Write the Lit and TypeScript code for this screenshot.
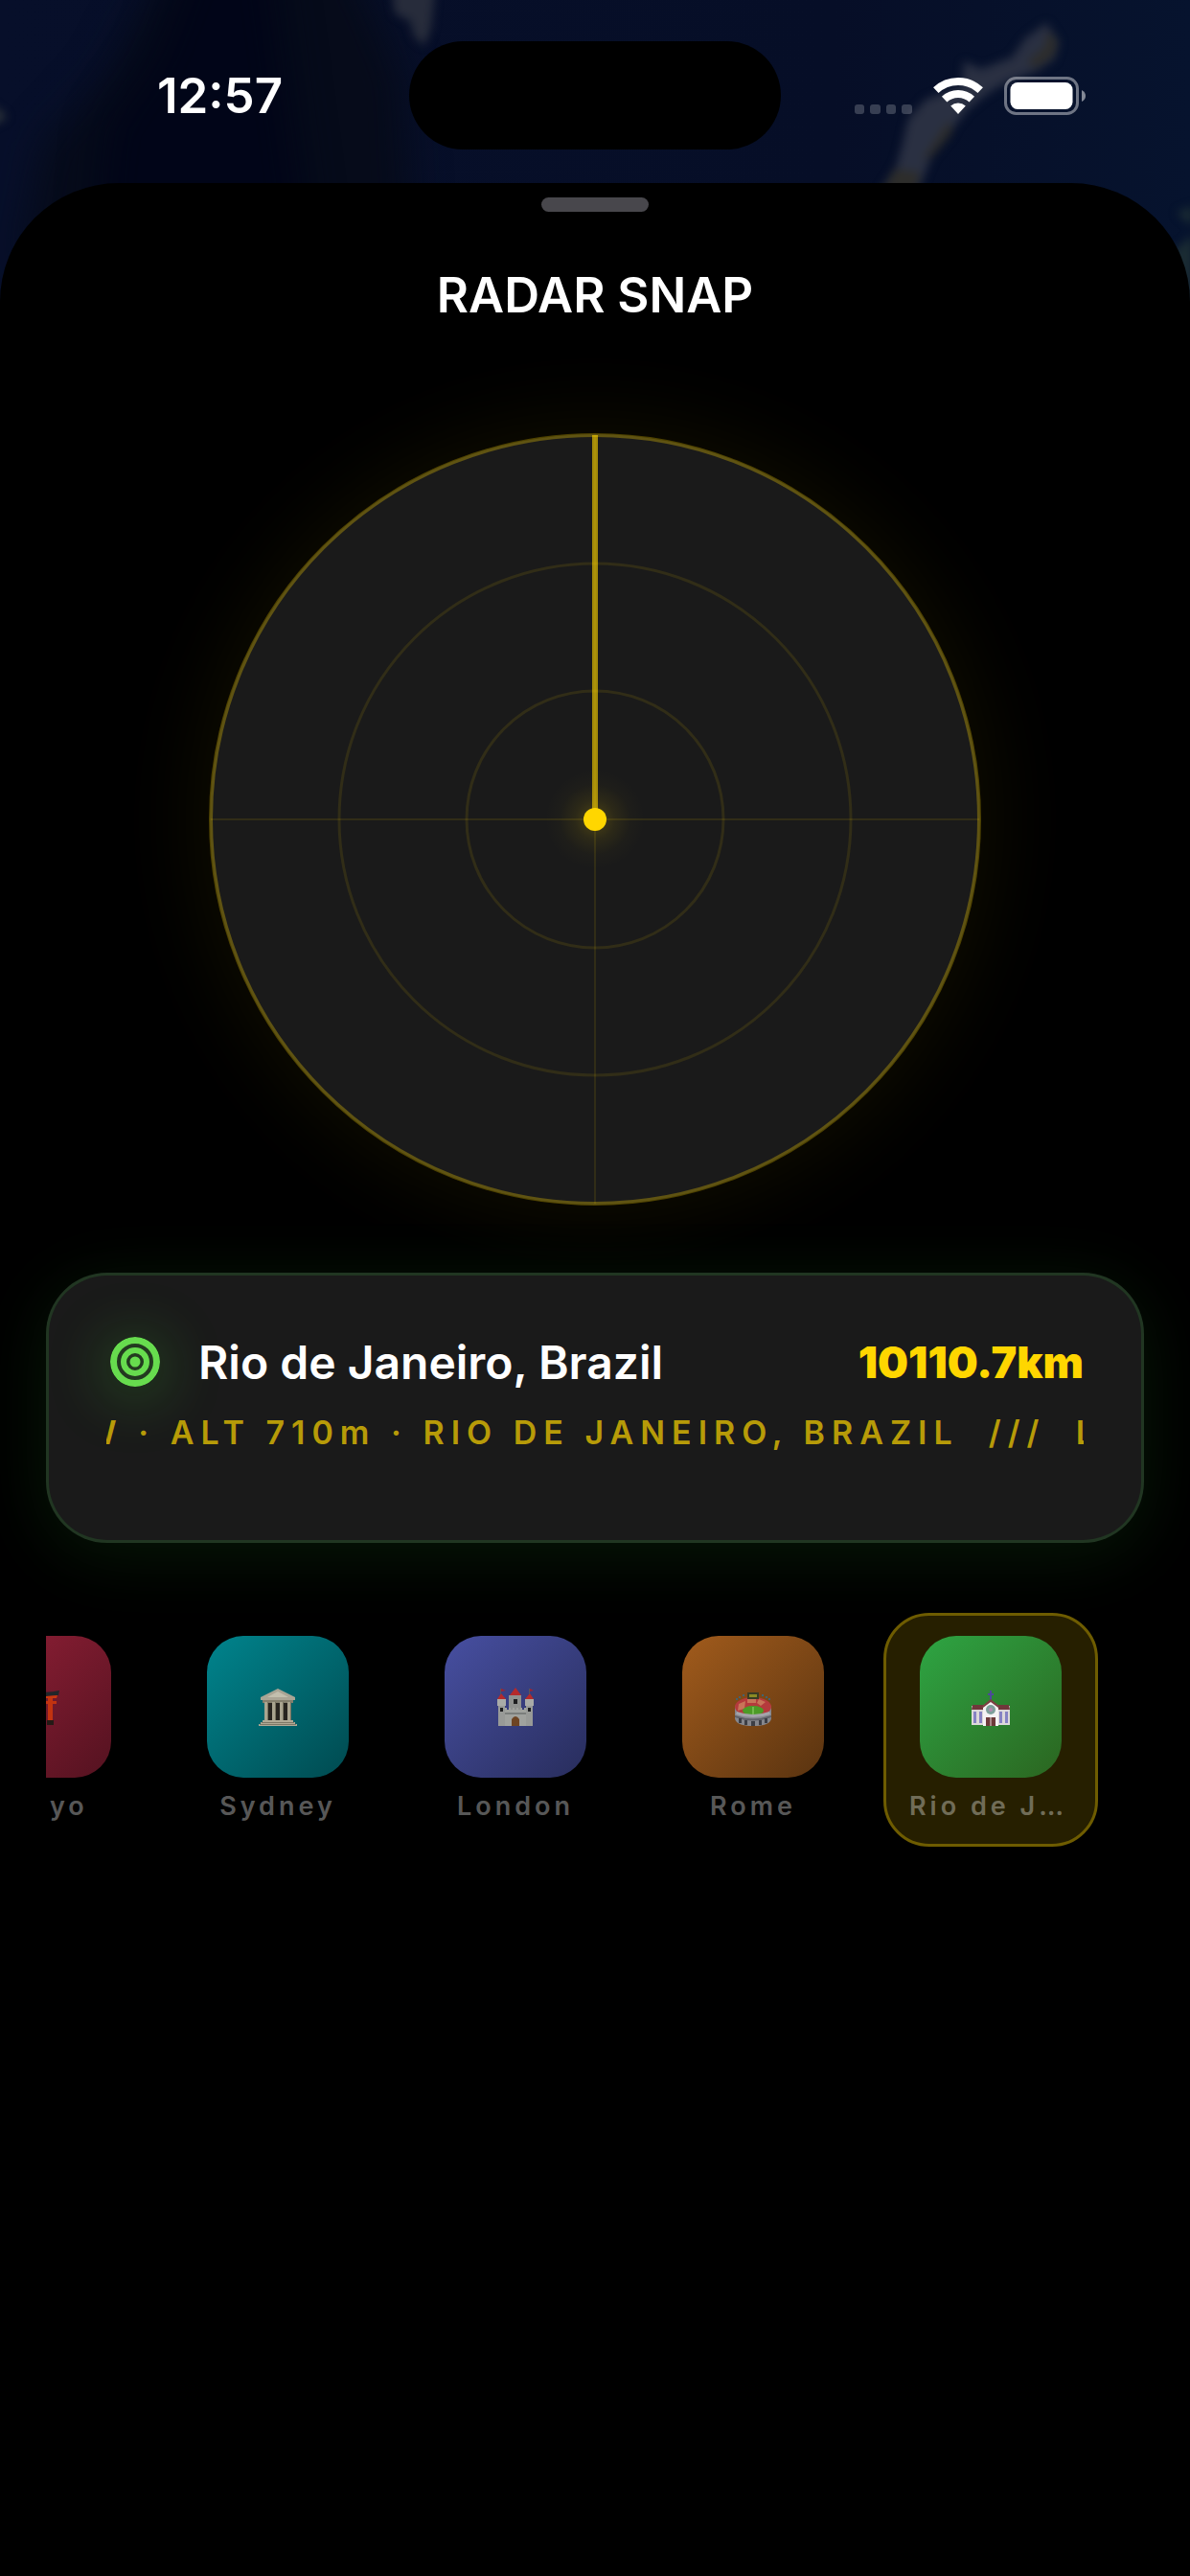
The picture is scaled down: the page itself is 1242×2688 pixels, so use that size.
import { LitElement, html, css, svg } from 'lit';
import { customElement, property, state } from 'lit/decorators.js';
import { classMap } from 'lit/directives/class-map.js';

interface City {
  id: string;
  name: string;
  icon: unknown;
}

const toriiIcon = svg`
  <path d="M0 3 Q20 7 40 3 L39 8 Q20 10 1 8 Z" fill="#22262a" />
  <path d="M2 8 Q20 10 38 8 L37 11 H3 Z" fill="#c9370f" />
  <path d="M3 14 H37 V17 H3 Z M7 11 H12 V34 H7 Z M28 11 H33 V34 H28 Z M18 10 H22 V15 H18 Z" fill="#c23310" />
  <path d="M6 34 H13 V39 H6 Z M27 34 H34 V39 H27 Z" fill="#241a16" />
`;

const templeIcon = svg`
  <path d="M20 1 L38 10 V13 H2 V10 Z" fill="#aaa595" />
  <path d="M20 4 L31 10 H9 Z" fill="#c3bfae" />
  <path d="M4 13 H36 V16 H4 Z" fill="#847f6d" />
  <path d="M6 16 H34 V34 H6 Z" fill="#27241f" />
  <path d="M6 15 H10 V34 H6 Z M14 15 H18 V34 H14 Z M22 15 H26 V34 H22 Z M30 15 H34 V34 H30 Z" fill="#a9a48f" />
  <path d="M9 15 H10 V34 H9 Z M17 15 H18 V34 H17 Z M25 15 H26 V34 H25 Z M33 15 H34 V34 H33 Z" fill="#77725f" />
  <path d="M4 34 H36 V36 H38 V38 H40 V40 H0 V38 H2 V36 H4 Z" fill="#b0aa96" />
  <path d="M3 36 H37 V37 H3 Z M1 38 H39 V39 H1 Z" fill="#7d7867" />
`;

const castleIcon = svg`
  <path d="M13 8 H26 V24 H13 Z" fill="#8f918f" />
  <path d="M1 12 H10 V19 H1 Z M30 12 H39 V19 H30 Z" fill="#a9aba8" />
  <path d="M2 19 H9 V40 H2 Z M31 19 H38 V40 H31 Z" fill="#989a97" />
  <path d="M9 21 H11 V23 H13 V21 H15 V23 H17 V21 H19 V23 H21 V21 H23 V23 H25 V21 H27 V23 H29 V21 H31 V40 H9 Z" fill="#a0a29e" />
  <path d="M9 26 H31 V28 H9 Z" fill="#7b7e7c" />
  <path d="M20 0 L26 8 H14 Z M5 6 L10 12 H1 Z M35 6 L39 12 H30 Z" fill="#b52a2b" />
  <path d="M5 1 L10 3 L5 4 Z M35 1 L39 3 L35 4 Z" fill="#9f2532" />
  <path d="M4 1 H5 V7 H4 Z M34 1 H35 V7 H34 Z" fill="#56575c" />
  <path d="M18 12 H22 V17 H18 Z M4 21 H7 V25 H4 Z M33 21 H36 V25 H33 Z" fill="#1d1e20" />
  <path d="M16 40 V33 Q20 27 24 33 V40 Z" fill="#6e4423" />
`;

const stadiumIcon = svg`
  <path d="M1 19 H39 V32 Q38 40 20 40 Q2 40 1 32 Z" fill="#85868c" />
  <path d="M1 29 Q20 36 39 29 V31 Q20 38 1 31 Z" fill="#5f6067" />
  <path d="M5 32 H8 V37 H5 Z M11 34 H14 V39 H11 Z M18 35 H22 V40 H18 Z M26 34 H29 V39 H26 Z M32 32 H35 V37 H32 Z" fill="#3c3e45" />
  <ellipse cx="20" cy="20" rx="19" ry="10" fill="#b53a3c" />
  <path d="M5 17 L12 14 L11 22 L4 24 Z M26 12 L33 15 L28 19 L24 16 Z M14 12 H23 V16 H14 Z" fill="#c87458" />
  <ellipse cx="20" cy="24" rx="11" ry="5" fill="#4c9b26" />
  <path d="M19 20 H21 V28 H19 Z" fill="#73b94d" />
  <path d="M3 25 Q20 31 37 25 L38 28 Q20 34 2 28 Z" fill="#a3a4aa" />
  <path d="M14 5 H26 V12 H14 Z" fill="#3a3c24" />
  <path d="M16 7 H24 V10 H16 Z" fill="#8a8a24" />
  <g fill="#2d6c8f"><circle cx="3" cy="12" r="1" /><circle cx="6" cy="10" r="1" /><circle cx="10" cy="8" r="1" /><circle cx="30" cy="8" r="1" /><circle cx="34" cy="10" r="1" /><circle cx="37" cy="12" r="1" /></g>
`;

const churchIcon = svg`
  <path d="M19 3 H21 V13 H19 Z M17 6 H23 V8 H17 Z" fill="#4d4a9a" />
  <path d="M0 19 H40 V39 H0 Z" fill="#dcd8da" />
  <path d="M1 18 H39 L40 23 H0 Z" fill="#70383b" />
  <path d="M12 40 V19 L20 13 L28 19 V40 Z" fill="#f4f2f3" />
  <path d="M20 12 L30 20 L28 21 L20 15 L12 21 L10 20 Z" fill="#7b3f41" />
  <circle cx="20" cy="23" r="5" fill="#7e9f9b" />
  <circle cx="20" cy="23" r="2" fill="#b58bb0" />
  <path d="M2 25 H5 V37 H2 Z M8 25 H11 V37 H8 Z M29 25 H32 V37 H29 Z M35 25 H38 V37 H35 Z" fill="#8683c4" />
  <path d="M15 31 H25 V40 H15 Z" fill="#6d3a3a" />
  <path d="M19 31 H21 V40 H19 Z" fill="#a98a89" />
`;

const CITIES: City[] = [
  { id: 'tokyo', name: 'Tokyo', icon: toriiIcon },
  { id: 'sydney', name: 'Sydney', icon: templeIcon },
  { id: 'london', name: 'London', icon: castleIcon },
  { id: 'rome', name: 'Rome', icon: stadiumIcon },
  { id: 'rio', name: 'Rio de Janeiro', icon: churchIcon },
];

@customElement('status-bar')
export class StatusBar extends LitElement {
  static styles = css`
    :host {
      display: grid;
      grid-template-columns: 1fr 388px 1fr;
      align-items: center;
      padding: 43px 0 35px;
      color: #fff;
    }

    .time {
      padding-left: 32px;
      text-align: center;
      font-size: 51px;
      font-weight: 600;
      line-height: 60px;
    }

    .island {
      height: 113px;
      border-radius: 57px;
      background: #000;
    }

    .icons {
      display: flex;
      justify-content: center;
      align-items: center;
      gap: 22px;
      padding-right: 31px;
    }

    svg {
      display: block;
      flex: none;
    }
  `;

  render() {
    return html`
      <div class="time">12:57</div>
      <div class="island"></div>
      <div class="icons">
        <svg width="60" height="40" viewBox="0 0 60 40" fill="#fff" fill-opacity="0.2">
          <rect x="0" y="29" width="10" height="10" rx="3" />
          <rect x="16" y="29" width="11" height="10" rx="3" />
          <rect x="33" y="29" width="10" height="10" rx="3" />
          <rect x="49" y="29" width="11" height="10" rx="3" />
        </svg>
        <svg width="52" height="40" viewBox="0 -1 52 40" fill="none" stroke="#fff" stroke-width="8">
          <path d="M2.8 13.1 A34 34 0 0 1 49.2 13.1" />
          <path d="M11.7 22.6 A21 21 0 0 1 40.3 22.6" />
          <path d="M26 38 L18.2 29.6 A11.5 11.5 0 0 1 33.8 29.6 Z" fill="#fff" stroke="none" />
        </svg>
        <svg width="86" height="40" viewBox="0 0 86 40">
          <rect x="1.5" y="1.5" width="75" height="37" rx="11" fill="none" stroke="#fff" stroke-opacity="0.42" stroke-width="3" />
          <rect x="6.5" y="6" width="65" height="28" rx="7.5" fill="#fff" />
          <path d="M81 14 Q85 16 85 20 Q85 24 81 26 Z" fill="#fff" fill-opacity="0.5" />
        </svg>
      </div>
    `;
  }
}

@customElement('radar-scope')
export class RadarScope extends LitElement {
  static styles = css`
    :host {
      display: block;
      width: 806px;
      max-width: 100%;
      border-radius: 50%;
      box-shadow: 0 0 100px rgba(255, 214, 0, 0.08);
    }

    svg {
      display: block;
      width: 100%;
      height: auto;
    }
  `;

  render() {
    return html`
      <svg viewBox="-403 -403 806 806" fill="none" stroke="#ffd600" role="img" aria-label="Radar">
        <defs>
          <radialGradient id="blip">
            <stop offset="0" stop-color="#ffd600" stop-opacity="0.22" />
            <stop offset="0.4" stop-color="#ffd600" stop-opacity="0.08" />
            <stop offset="0.7" stop-color="#ffd600" stop-opacity="0.02" />
            <stop offset="1" stop-color="#ffd600" stop-opacity="0" />
          </radialGradient>
        </defs>
        <circle r="402" fill="#1a1a1a" stroke="none" />
        <g stroke-opacity="0.1">
          <circle r="134" stroke-width="3" />
          <circle r="267" stroke-width="3" />
          <path d="M-401 0 H401 M0 -401 V401" stroke-width="2" />
        </g>
        <circle r="401" stroke-width="4" stroke-opacity="0.3" />
        <path d="M0 -401 V0" stroke-width="6" stroke-opacity="0.6" />
        <circle r="52" fill="url(#blip)" stroke="none" />
        <circle r="12" fill="#ffd600" stroke="none" />
      </svg>
    `;
  }
}

@customElement('target-card')
export class TargetCard extends LitElement {
  @property() place = '';
  @property() distance = '';
  @property() ticker = '';
  @property({ type: Number }) scrolled = 0;

  static styles = css`
    :host {
      display: block;
      padding: 54px 60px 90px;
      border: 3px solid rgba(76, 217, 80, 0.15);
      border-radius: 64px;
      background: #1a1a1a;
      box-shadow: 0 12px 72px rgba(60, 217, 60, 0.11);
    }

    .row {
      display: flex;
      align-items: center;
      height: 72px;
    }

    .mark {
      flex: none;
      padding: 4px;
      margin-right: 36px;
    }

    .mark svg {
      display: block;
      border-radius: 50%;
      background: #233a20;
      box-shadow: 0 6px 64px 4px rgba(76, 217, 60, 0.3);
    }

    h2 {
      flex: 1;
      margin: 0;
      font-size: 48px;
      font-weight: 600;
      color: #fff;
    }

    .distance {
      font-size: 45px;
      font-weight: 900;
      color: #ffd600;
    }

    .ticker {
      margin-top: 16px;
      overflow: hidden;
      white-space: pre;
      font-size: 34px;
      font-weight: 600;
      line-height: 44px;
      letter-spacing: 7px;
      color: rgba(255, 214, 0, 0.7);
    }
  `;

  render() {
    return html`
      <div class="row">
        <div class="mark">
          <svg width="52" height="52" viewBox="0 0 52 52" fill="none" stroke="#67dc4e">
            <circle cx="26" cy="26" r="22.5" stroke-width="7" />
            <circle cx="26" cy="26" r="12" stroke-width="6" />
            <circle cx="26" cy="26" r="5.5" fill="#67dc4e" stroke="none" />
          </svg>
        </div>
        <h2>${this.place}</h2>
        <div class="distance">${this.distance}</div>
      </div>
      <div class="ticker"><span style="margin-left: ${-this.scrolled}px">${this.ticker}</span></div>
    `;
  }
}

@customElement('city-picker')
export class CityPicker extends LitElement {
  @property({ attribute: false }) cities: City[] = [];
  @property() selected = '';

  static styles = css`
    :host {
      display: flex;
      justify-content: flex-end;
      gap: 24px;
      padding-right: 48px;
      overflow: hidden;
    }

    button {
      flex: none;
      display: flex;
      flex-direction: column;
      align-items: center;
      gap: 12px;
      width: 224px;
      padding: 21px 24px;
      border: 3px solid transparent;
      border-radius: 48px;
      background: none;
      font: inherit;
      color: rgba(255, 255, 255, 0.36);
    }

    button.selected {
      border-color: #6e5c00;
      background: #261f00;
    }

    .tile {
      display: grid;
      place-items: center;
      width: 148px;
      height: 148px;
      border-radius: 38px;
    }

    .tokyo { background: linear-gradient(135deg, #932037, #541220); }
    .sydney { background: linear-gradient(135deg, #00848d, #004a50); }
    .london { background: linear-gradient(135deg, #474fa1, #282d5c); }
    .rome { background: linear-gradient(135deg, #a15b1c, #593310); }
    .rio { background: linear-gradient(135deg, #2ea543, #2b6520); }

    .label {
      max-width: 100%;
      overflow: hidden;
      text-overflow: ellipsis;
      white-space: nowrap;
      font-size: 27px;
      font-weight: 600;
      line-height: 36px;
      letter-spacing: 4px;
    }
  `;

  render() {
    return html`
      ${this.cities.map(
        (city) => html`
          <button
            class=${classMap({ selected: city.id === this.selected })}
            aria-pressed=${city.id === this.selected}
            @click=${() => this.pick(city.id)}
          >
            <span class="tile ${city.id}">
              <svg width="40" height="40" viewBox="0 0 40 40" aria-hidden="true">${city.icon}</svg>
            </span>
            <span class="label">${city.name}</span>
          </button>
        `
      )}
    `;
  }

  private pick(id: string) {
    this.dispatchEvent(new CustomEvent('city-change', { detail: id }));
  }
}

@customElement('app-root')
export class AppRoot extends LitElement {
  @state() private city = 'rio';

  static styles = css`
    :host {
      display: block;
      position: relative;
      min-height: 100vh;
      overflow: hidden;
      background: #000;
      font-family: Inter, 'Liberation Sans', sans-serif;
    }

    .globe {
      position: absolute;
      top: 0;
      left: 0;
      width: 100%;
      height: 400px;
    }

    .content {
      position: relative;
    }

    .sheet {
      display: flex;
      flex-direction: column;
      align-items: center;
      min-height: calc(100vh - 191px);
      box-sizing: border-box;
      padding: 15px 48px 48px;
      border-radius: 124px 124px 0 0;
      background: #000;
    }

    .grabber {
      width: 112px;
      height: 15px;
      border-radius: 8px;
      background: #48474c;
    }

    h1 {
      margin: 57px 0 114px;
      font-size: 51px;
      font-weight: 600;
      line-height: 60px;
      color: #fff;
    }

    target-card,
    city-picker {
      align-self: stretch;
    }

    target-card {
      margin: 70px 0 73px;
    }
  `;

  render() {
    return html`
      <svg class="globe" viewBox="0 0 1242 400" preserveAspectRatio="none" aria-hidden="true">
        <defs>
          <linearGradient id="sea">
            <stop offset="0" stop-color="#070f2a" />
            <stop offset="0.7" stop-color="#060e27" />
            <stop offset="1" stop-color="#06132e" />
          </linearGradient>
          <filter id="soft" x="-30%" y="-30%" width="160%" height="160%" color-interpolation-filters="sRGB">
            <feGaussianBlur stdDeviation="5" />
          </filter>
          <filter id="haze" x="-30%" y="-30%" width="160%" height="160%" color-interpolation-filters="sRGB">
            <feGaussianBlur stdDeviation="20" />
          </filter>
        </defs>
        <rect width="1242" height="400" fill="url(#sea)" />
        <path d="M185 -60 L360 -60 L420 80 L430 250 L20 280 L45 150 L110 80 Z" fill="#060b1a" filter="url(#haze)" />
        <path d="M205 -60 L280 -60 L300 90 L320 240 L100 240 L110 130 L160 60 Z" fill="#010518" filter="url(#haze)" />
        <g filter="url(#soft)">
          <path d="M408 -20 L455 -20 L450 30 L443 48 L432 38 L428 22 L412 14 Z" fill="#272c3b" />
          <path d="M-10 108 L8 122 L-10 132 Z" fill="#2b3138" />
          <path d="M1092 24 L1106 44 L1100 62 L1082 74 L1050 86 L1030 98 L1008 116 L990 140 L972 164 L958 200 L918 200 L936 172 L942 150 L948 124 L966 104 L1004 90 L1006 64 L1024 72 L1056 60 L1070 40 Z" fill="#2a3042" />
          <path d="M1094 32 L1104 44 L1098 60 L1078 72 L1074 62 L1090 50 Z M990 126 L994 138 L974 162 L962 168 Z M934 176 L960 180 L956 200 L920 200 Z" fill="#2d2d2b" />
          <path d="M1228 222 L1245 215 L1245 236 Z M1225 262 L1245 245 L1245 330 L1236 310 Z" fill="#1b2c33" />
        </g>
      </svg>
      <div class="content">
        <status-bar></status-bar>
        <main class="sheet">
          <div class="grabber"></div>
          <h1>RADAR SNAP</h1>
          <radar-scope></radar-scope>
          <target-card
            place="Rio de Janeiro, Brazil"
            distance="10110.7km"
            ticker="W · ALT 710m · RIO DE JANEIRO, BRAZIL  ///  LAT"
            scrolled="24"
          ></target-card>
          <city-picker
            .cities=${CITIES}
            selected=${this.city}
            @city-change=${(e: CustomEvent<string>) => (this.city = e.detail)}
          ></city-picker>
        </main>
      </div>
    `;
  }
}
